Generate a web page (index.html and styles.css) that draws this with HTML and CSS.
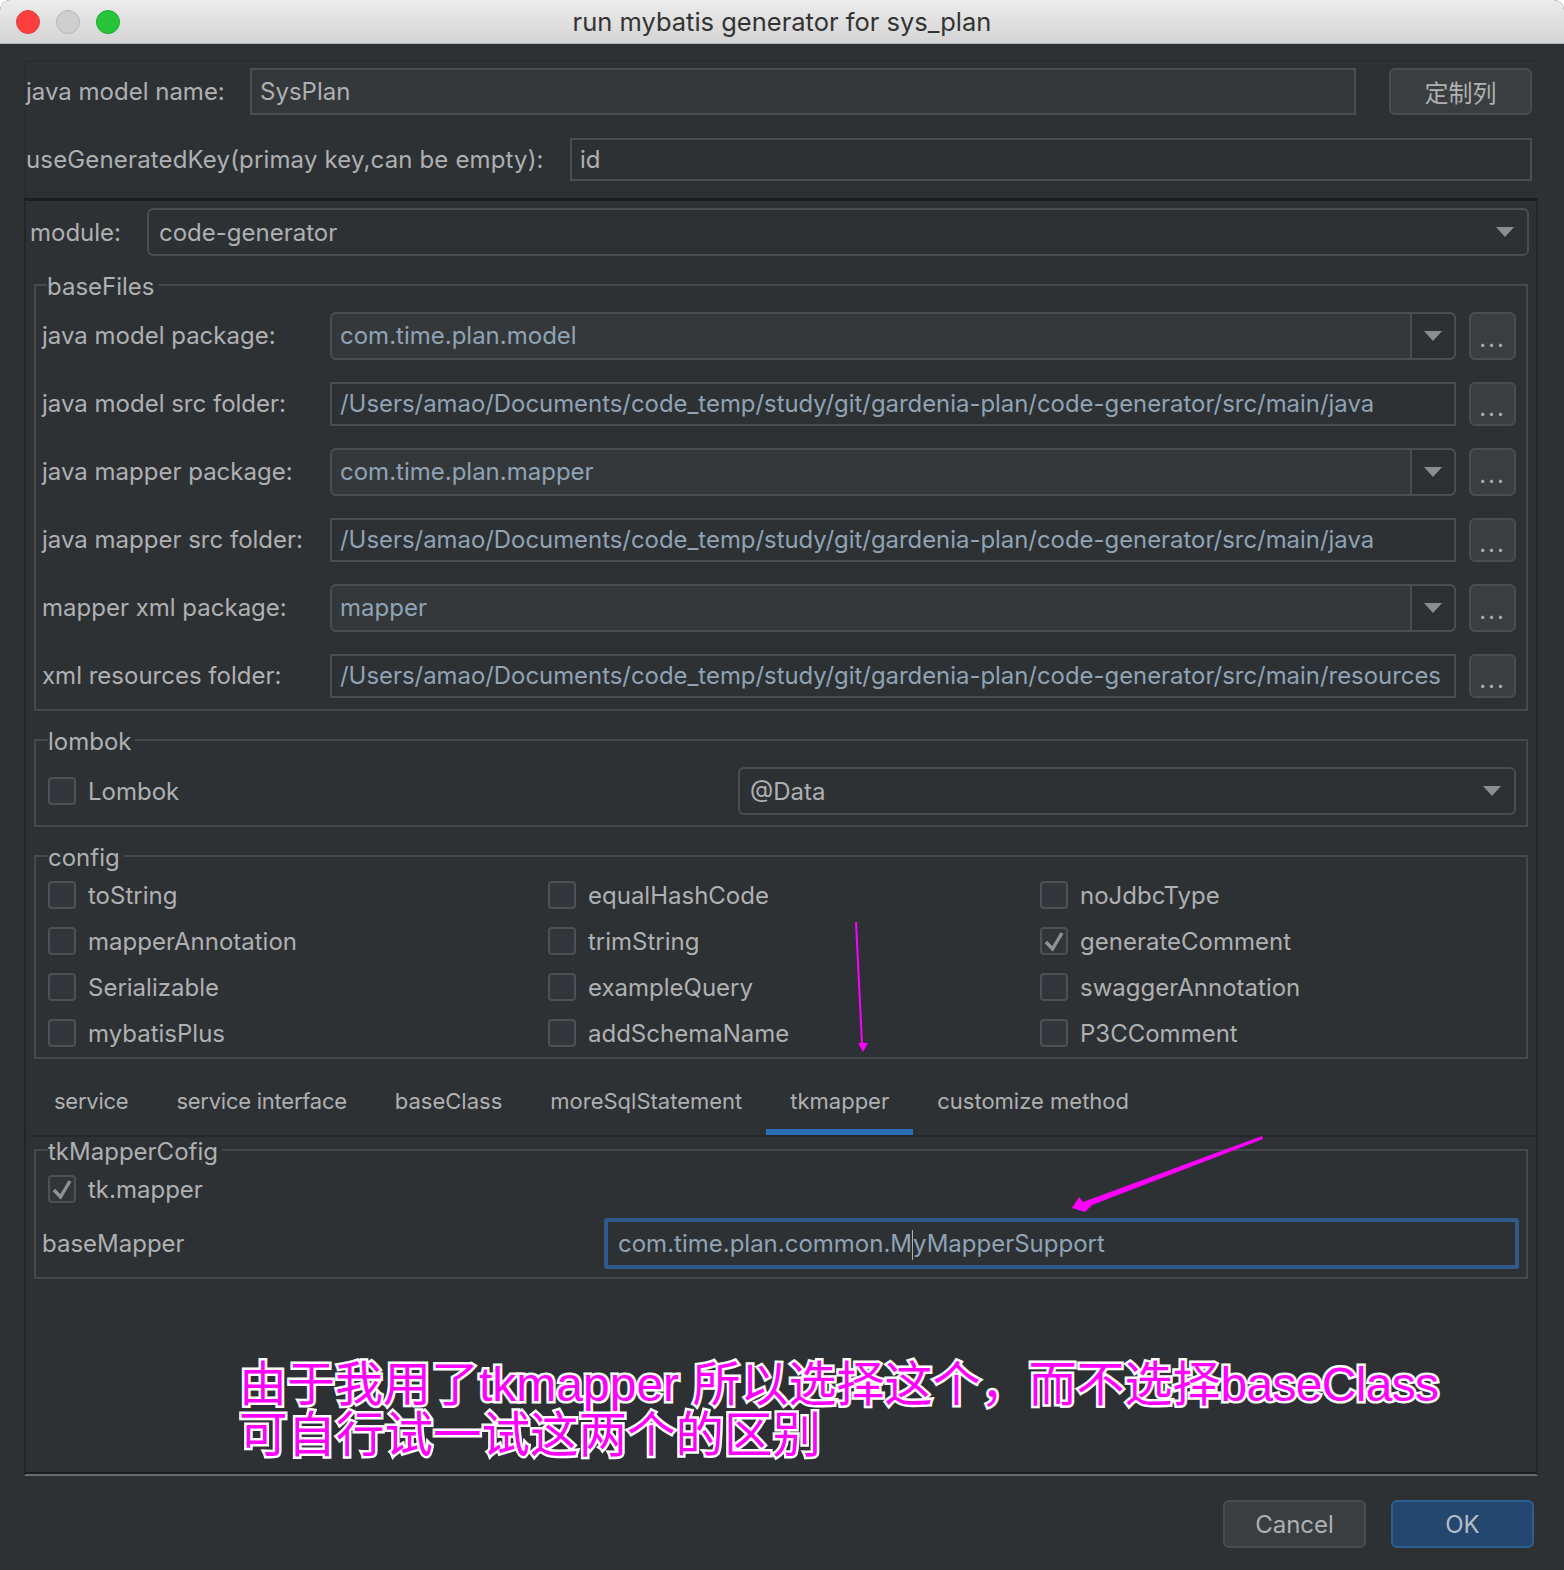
FILE: index.html
```html
<!DOCTYPE html>
<html lang="en">
<head>
    <meta charset="UTF-8">
    <meta name="viewport" content="width=device-width, initial-scale=1.0">
    <title>run mybatis generator for sys_plan</title>
    <link rel="stylesheet" href="styles.css">
</head>
<body>
    <div class="window">
        <div class="titlebar">
            <span class="light red"></span>
            <span class="light gray"></span>
            <span class="light green"></span>
            <div class="title">run mybatis generator for sys_plan</div>
        </div>

        <div class="content">
            <div class="top">
                <div class="row model-row">
                    <label class="model-label">java model name:</label>
                    <div class="input filled grow">SysPlan</div>
                    <button class="btn custom-btn">定制列</button>
                </div>
                <div class="row key-row">
                    <label class="key-label">useGeneratedKey(primay key,can be empty):</label>
                    <div class="input grow">id</div>
                </div>
            </div>

            <div class="main">
                <div class="row module-row">
                    <label class="module-label">module:</label>
                    <div class="select grow"><span>code-generator</span><i class="caret"></i></div>
                </div>

                <fieldset class="group base-group">
                    <legend>baseFiles</legend>
                    <div class="row file-row">
                        <label>java model package:</label>
                        <div class="combo grow"><span>com.time.plan.model</span><b><i class="caret"></i></b></div>
                        <button class="btn dots">...</button>
                    </div>
                    <div class="row file-row">
                        <label>java model src folder:</label>
                        <div class="input path grow">/Users/amao/Documents/code_temp/study/git/gardenia-plan/code-generator/src/main/java</div>
                        <button class="btn dots short">...</button>
                    </div>
                    <div class="row file-row">
                        <label>java mapper package:</label>
                        <div class="combo grow"><span>com.time.plan.mapper</span><b><i class="caret"></i></b></div>
                        <button class="btn dots">...</button>
                    </div>
                    <div class="row file-row">
                        <label>java mapper src folder:</label>
                        <div class="input path grow">/Users/amao/Documents/code_temp/study/git/gardenia-plan/code-generator/src/main/java</div>
                        <button class="btn dots short">...</button>
                    </div>
                    <div class="row file-row">
                        <label>mapper xml package:</label>
                        <div class="combo grow"><span>mapper</span><b><i class="caret"></i></b></div>
                        <button class="btn dots">...</button>
                    </div>
                    <div class="row file-row">
                        <label>xml resources folder:</label>
                        <div class="input path grow">/Users/amao/Documents/code_temp/study/git/gardenia-plan/code-generator/src/main/resources</div>
                        <button class="btn dots short">...</button>
                    </div>
                </fieldset>

                <fieldset class="group lombok-group">
                    <legend>lombok</legend>
                    <div class="row lombok-row">
                        <div class="check"><span class="box"></span>Lombok</div>
                        <div class="select lombok-select"><span>@Data</span><i class="caret"></i></div>
                    </div>
                </fieldset>

                <fieldset class="group config-group">
                    <legend>config</legend>
                    <div class="config-grid">
                        <div class="check"><span class="box"></span>toString</div>
                        <div class="check"><span class="box"></span>equalHashCode</div>
                        <div class="check"><span class="box"></span>noJdbcType</div>
                        <div class="check"><span class="box"></span>mapperAnnotation</div>
                        <div class="check"><span class="box"></span>trimString</div>
                        <div class="check"><span class="box"><svg viewBox="0 0 24 24"><path d="M4 13L10.5 20L20 4" fill="none" stroke="#8f9294" stroke-width="3.4"/></svg></span>generateComment</div>
                        <div class="check"><span class="box"></span>Serializable</div>
                        <div class="check"><span class="box"></span>exampleQuery</div>
                        <div class="check"><span class="box"></span>swaggerAnnotation</div>
                        <div class="check"><span class="box"></span>mybatisPlus</div>
                        <div class="check"><span class="box"></span>addSchemaName</div>
                        <div class="check"><span class="box"></span>P3CComment</div>
                    </div>
                </fieldset>

                <div class="tabs">
                    <div class="tab tight">service</div>
                    <div class="tab tight">service interface</div>
                    <div class="tab">baseClass</div>
                    <div class="tab">moreSqlStatement</div>
                    <div class="tab active">tkmapper</div>
                    <div class="tab">customize method</div>
                </div>

                <fieldset class="group mapper-group">
                    <legend>tkMapperCofig</legend>
                    <div class="check mapper-check"><span class="box"><svg viewBox="0 0 24 24"><path d="M4 13L10.5 20L20 4" fill="none" stroke="#8f9294" stroke-width="3.4"/></svg></span>tk.mapper</div>
                    <div class="row mapper-row">
                        <label>baseMapper</label>
                        <div class="input focused grow">com.time.plan.common.M<span class="cursor"></span>yMapperSupport</div>
                    </div>
                </fieldset>
            </div>

            <div class="footer">
                <button class="btn action">Cancel</button>
                <button class="btn action ok">OK</button>
            </div>
        </div>

        <svg class="arrows" viewBox="0 0 1564 1570">
            <path d="M856 922L862 1044" stroke="#f0f" stroke-width="2" fill="none"/>
            <path d="M858 1043L868 1043L863 1052Z" fill="#f0f"/>
            <path d="M1262 1136L1263 1139L1092 1205L1085 1212L1072 1208L1079 1197L1083 1202Z" fill="#f0f"/>
        </svg>

        <div class="note">
            <div>由于我用了tkmapper 所以选择这个，而不选择<span class="note-latin">baseClass</span></div>
            <div class="note-second">可自行试一试这两个的区别</div>
        </div>
    </div>
</body>
</html>
```

FILE: styles.css
```css
* {
    box-sizing: border-box;
}
html, body {
    margin: 0;
    padding: 0;
    background-color: #fff;
}
.window {
    position: relative;
    width: 1564px;
    height: 1570px;
    overflow: hidden;
    background-color: #2e3134;
    border-radius: 10px 10px 0 0;
    font-family: Inter, "Noto Sans CJK SC", sans-serif;
    font-size: 24px;
    color: #aeb0b2;
}
.titlebar {
    position: relative;
    display: flex;
    align-items: center;
    height: 44px;
    padding-left: 16px;
    gap: 16px;
    background: linear-gradient(#ececec, #d4d4d4);
    border-bottom: 1px solid #b5b5b5;
}
.light {
    width: 24px;
    height: 24px;
    border-radius: 50%;
}
.red {
    background-color: #fc3e3f;
    border: 1px solid #e0443e;
}
.gray {
    background-color: #cfcfcf;
    border: 1px solid #b4b4b4;
}
.green {
    background-color: #27c338;
    border: 1px solid #1fa82c;
}
.title {
    position: absolute;
    left: 0;
    right: 0;
    text-align: center;
    font-size: 25.5px;
    color: #333;
}
.content {
    padding: 16px 26px 0 24px;
}
.row {
    display: flex;
    align-items: center;
}
.grow {
    flex: 1;
    min-width: 0;
}
.top {
    height: 138px;
    padding-top: 8px;
    padding-right: 6px;
    border-top: 2px solid #2a2c2e;
    border-left: 2px solid #2a2c2e;
}
.model-row {
    height: 47px;
    margin-top: -2px;
}
.model-label {
    width: 224px;
}
.key-row {
    height: 43px;
    margin-top: 23px;
}
.key-label {
    width: 544px;
    letter-spacing: 0.15px;
}
.input {
    height: 44px;
    line-height: 40px;
    padding-left: 8px;
    border: 2px solid #4b4e50;
    white-space: nowrap;
    overflow: hidden;
}
.model-row .input {
    height: 47px;
    line-height: 43px;
}
.key-row .input {
    height: 43px;
    line-height: 39px;
}
.filled {
    background-color: #35383a;
}
.path {
    font-size: 23.9px;
    color: #8fa3b5;
}
.btn {
    font-family: inherit;
    font-size: 24px;
    color: #aeb0b2;
    background-color: #3b3e40;
    border: 2px solid #4a4d4f;
    border-radius: 6px;
    padding: 0;
}
.custom-btn {
    width: 143px;
    height: 47px;
    margin-left: 33px;
}
.main {
    height: 1278px;
    padding: 0 8px 0 8px;
    border-top: 3px solid #1b1d1f;
    border-left: 2px solid #232527;
    border-right: 2px solid #232527;
    border-bottom: 2px solid #6a6c6e;
    box-shadow: inset 0 -2px 0 #1b1d1f;
}
.module-row {
    height: 48px;
    margin-top: 7px;
    margin-left: -4px;
    margin-right: -1px;
}
.module-label {
    width: 117px;
}
.select {
    display: flex;
    align-items: center;
    justify-content: space-between;
    height: 48px;
    padding: 0 13px 0 10px;
    border: 2px solid #4b4e50;
    border-radius: 6px;
}
.caret {
    width: 0;
    height: 0;
    border-left: 9px solid transparent;
    border-right: 9px solid transparent;
    border-top: 10px solid #8b8e91;
}
.group {
    margin: 14px 0 0;
    padding: 0 11px;
    border: 2px solid #46494b;
    min-width: 0;
}
.group legend {
    padding: 0 4px 0 0;
    margin-left: 0;
    height: 30px;
    line-height: 34px;
}
.base-group {
    margin-top: 14px;
    padding: 12px 10px 9px 6px;
}
.base-group legend {
    margin-left: 5px;
}
.file-row {
    height: 48px;
    margin-bottom: 20px;
}
.file-row:last-child {
    margin-bottom: 0;
}
.file-row label {
    width: 288px;
    padding-bottom: 2px;
}
.combo {
    display: flex;
    align-items: center;
    height: 48px;
    color: #8fa3b5;
    background-color: #35383a;
    border: 2px solid #4b4e50;
    border-radius: 6px;
}
.combo span {
    flex: 1;
    padding-left: 8px;
    padding-bottom: 2px;
}
.combo b {
    display: flex;
    align-items: center;
    justify-content: center;
    width: 44px;
    height: 100%;
    background-color: #2e3134;
    border-left: 2px solid #4b4e50;
    border-radius: 0 5px 5px 0;
}
.dots {
    width: 47px;
    height: 48px;
    margin-left: 13px;
    line-height: 50px;
    letter-spacing: 2px;
}
.short {
    height: 44px;
    line-height: 48px;
}
.lombok-group {
    padding: 12px 10px 10px 12px;
}
.lombok-row {
    justify-content: space-between;
    height: 48px;
}
.lombok-select {
    width: 778px;
}
.check {
    display: flex;
    align-items: center;
    height: 46px;
}
.box {
    display: block;
    width: 28px;
    height: 28px;
    margin-right: 12px;
    background-color: #32353a;
    border: 2px solid #4e5153;
    border-radius: 4px;
}
.box svg {
    display: block;
    width: 24px;
    height: 24px;
}
.config-group {
    padding-left: 12px;
    padding-top: 1px;
    padding-bottom: 1px;
}
.config-grid {
    display: grid;
    grid-template-columns: 500px 492px 1fr;
}
.tabs {
    display: flex;
    height: 64px;
    margin: 14px -8px 0 -4px;
    border-bottom: 2px solid #25272a;
    font-size: 22px;
}
.tab {
    padding: 13px 24px 0;
    height: 62px;
    line-height: 30px;
}
.tight {
    letter-spacing: -0.25px;
}
.active {
    border-bottom: 6px solid #2b70b5;
}
.mapper-group {
    margin-top: -2px;
    padding: 0 11px 8px 6px;
}
.mapper-group legend {
    margin-left: 6px;
}
.mapper-check {
    height: 30px;
    margin-left: 6px;
    margin-top: 9px;
}
.mapper-row {
    height: 51px;
    margin-top: 14px;
    margin-right: -4px;
}
.mapper-row label {
    width: 562px;
}
.focused {
    height: 51px;
    line-height: 43px;
    padding-left: 10px;
    color: #8fa3b5;
    border: 4px solid #2f5a8c;
    border-radius: 3px;
}
.cursor {
    display: inline-block;
    width: 0;
    height: 30px;
    vertical-align: middle;
    border-left: 1px solid #aeb0b2;
}
.footer {
    display: flex;
    justify-content: flex-end;
    gap: 25px;
    margin-top: 24px;
    margin-right: 4px;
}
.action {
    width: 143px;
    height: 48px;
}
.ok {
    color: #b5bcc4;
    background-color: #24476f;
    border-color: #2f5f8f;
}
.arrows {
    position: absolute;
    left: 0;
    top: 0;
    width: 1564px;
    height: 1570px;
    pointer-events: none;
}
.note {
    position: absolute;
    left: 239px;
    top: 1359px;
    font-family: "Liberation Sans", "Noto Sans CJK SC", sans-serif;
    font-size: 48px;
    line-height: 51px;
    white-space: nowrap;
    color: #f0f;
    -webkit-text-stroke: 5px #fff;
    paint-order: stroke fill;
}
.note-latin {
    letter-spacing: -0.7px;
}
.note-second {
    font-size: 48.5px;
}
```
